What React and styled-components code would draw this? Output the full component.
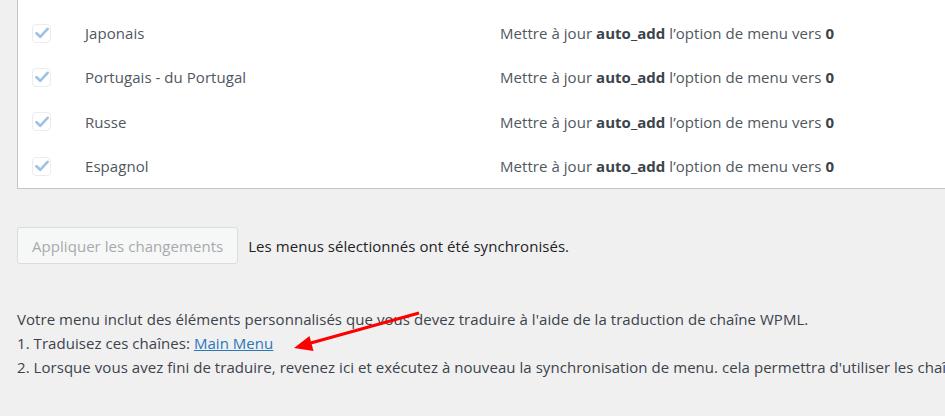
import React from "react";
import styled, { createGlobalStyle } from "styled-components";

const GlobalStyle = createGlobalStyle`
  html, body {
    margin: 0;
    padding: 0;
    background: #f0f0f1;
    overflow: hidden;
  }
  body {
    font-family: "Open Sans", "Noto Sans", sans-serif;
    font-size: 15px;
    letter-spacing: 0.05px;
    color: #3c434a;
  }
`;

const Page = styled.div`
  position: relative;
  width: 1200px;
  height: 416px;
  padding-left: 17px;
  box-sizing: border-box;
`;

const Panel = styled.div`
  padding: 11px 0 0;
  background: #fff;
  border: 1px solid #c3c4c7;
  border-top: 0;
`;

const Row = styled.div`
  display: grid;
  grid-template-columns: 53px 415px 1fr;
  align-items: center;
  height: 44.3px;
  padding-left: 14px;
  color: #50575e;
`;

const Box = styled.span`
  display: flex;
  align-items: center;
  justify-content: center;
  width: 17px;
  height: 17px;
  border: 1px solid #ececec;
  border-radius: 4px;
  background: #fff;
`;

const Language = styled.span`
  white-space: nowrap;
`;

const Desc = styled.span`
  white-space: nowrap;
  b {
    font-weight: 700;
    color: #3c434a;
  }
`;

const Actions = styled.div`
  display: flex;
  align-items: center;
  gap: 10px;
  margin-top: 38px;
`;

const Button = styled.button`
  height: 37px;
  padding: 0 14px;
  font-family: inherit;
  font-size: 15px;
  letter-spacing: inherit;
  color: #a7aaad;
  background: #f6f7f7;
  border: 1px solid #dcdcde;
  border-radius: 3px;
  cursor: default;
`;

const Status = styled.span`
  color: #1d2327;
`;

const Notes = styled.div`
  margin-top: 43px;
  line-height: 24px;
  white-space: nowrap;
  color: #3c434a;
  p {
    margin: 0;
  }
`;

const Link = styled.a`
  color: #2a78b8;
  text-decoration: underline;
`;

const Overlay = styled.svg`
  position: absolute;
  left: 0;
  top: 0;
  pointer-events: none;
`;

const Check = () => (
  <svg width="14" height="12" viewBox="0 0 14 12">
    <path
      d="M1.5 6.2 L5.2 9.8 L12.6 1.8"
      fill="none"
      stroke="#9ec2e6"
      strokeWidth="2.6"
      strokeLinecap="round"
      strokeLinejoin="round"
    />
  </svg>
);

const languages = ["Japonais", "Portugais - du Portugal", "Russe", "Espagnol"];

export default function App() {
  return (
    <Page>
      <GlobalStyle />
      <Panel>
        {languages.map((lang) => (
          <Row key={lang}>
            <Box>
              <Check />
            </Box>
            <Language>{lang}</Language>
            <Desc>
              Mettre à jour <b>auto_add</b> l’option de menu vers <b>0</b>
            </Desc>
          </Row>
        ))}
      </Panel>
      <Actions>
        <Button disabled>Appliquer les changements</Button>
        <Status>Les menus sélectionnés ont été synchronisés.</Status>
      </Actions>
      <Notes>
        <p>
          Votre menu inclut des éléments personnalisés que vous devez traduire à
          l'aide de la traduction de chaîne WPML.
        </p>
        <p>
          1. Traduisez ces chaînes: <Link href="#">Main Menu</Link>
        </p>
        <p>
          2. Lorsque vous avez fini de traduire, revenez ici et exécutez à nouveau
          la synchronisation de menu. cela permettra d'utiliser les chaînes
          traduites.
        </p>
      </Notes>
      <Overlay width="945" height="416">
        <line x1="419" y1="313" x2="309" y2="343.5" stroke="#ff0000" strokeWidth="3" />
        <polygon points="294,348 309.5,336 313.5,351" fill="#ff0000" />
      </Overlay>
    </Page>
  );
}
